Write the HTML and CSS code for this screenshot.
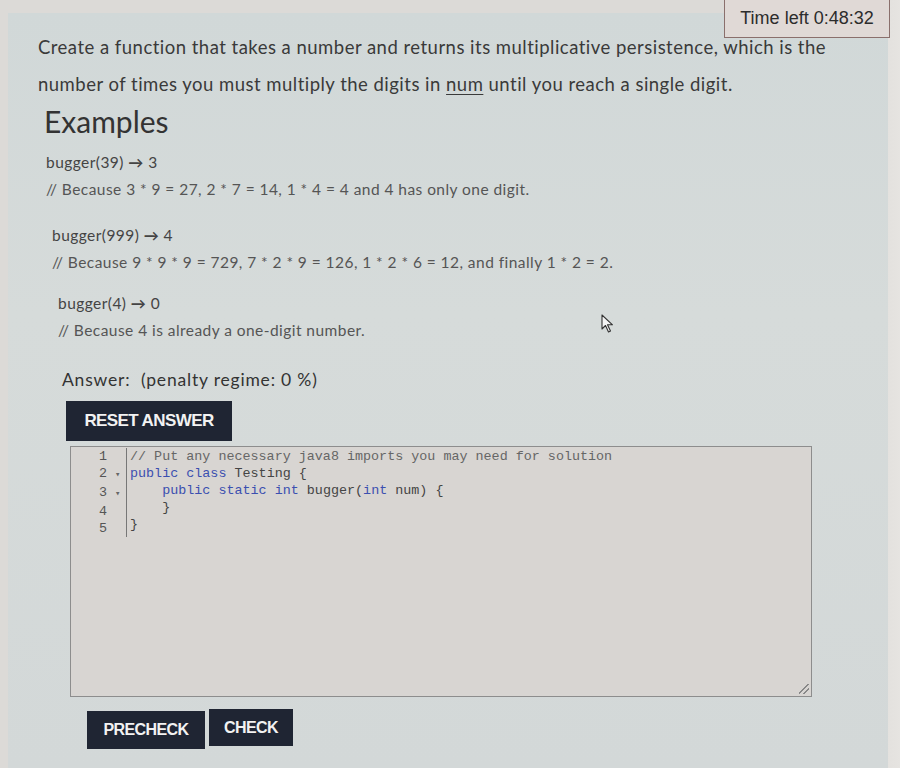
FILE: index.html
```html
<!DOCTYPE html>
<html>
<head>
<meta charset="utf-8">
<link rel="stylesheet" href="styles.css">
</head>
<body>
<div class="page">
  <div class="timer">Time left 0:48:32</div>
  <div class="panel">
    <p class="desc">Create a function that takes a number and returns its multiplicative persistence, which is the number of times you must multiply the digits in <u>num</u> until you reach a single digit.</p>
    <h2 class="heading">Examples</h2>
    <div class="example ex1">
      <div class="call">bugger(39) <span class="arrow">&rarr;</span> 3</div>
      <div class="comment">// Because 3 * 9 = 27, 2 * 7 = 14, 1 * 4 = 4 and 4 has only one digit.</div>
    </div>
    <div class="example ex2">
      <div class="call">bugger(999) <span class="arrow">&rarr;</span> 4</div>
      <div class="comment">// Because 9 * 9 * 9 = 729, 7 * 2 * 9 = 126, 1 * 2 * 6 = 12, and finally 1 * 2 = 2.</div>
    </div>
    <div class="example ex3">
      <div class="call">bugger(4) <span class="arrow">&rarr;</span> 0</div>
      <div class="comment">// Because 4 is already a one-digit number.</div>
    </div>
    <div class="answer">Answer:&nbsp; (penalty regime: 0 %)</div>
    <button class="btn reset">RESET ANSWER</button>
    <div class="editor">
      <div class="code-area">
        <div class="gutter">
          <div class="ln">1</div>
          <div class="ln">2 <span class="fold">&#9662;</span></div>
          <div class="ln">3 <span class="fold">&#9662;</span></div>
          <div class="ln">4</div>
          <div class="ln">5</div>
        </div>
        <div class="code">
          <div class="cl"><span class="cm">// Put any necessary java8 imports you may need for solution</span></div>
          <div class="cl"><span class="kw">public</span> <span class="kw">class</span> Testing {</div>
          <div class="cl">    <span class="kw">public</span> <span class="kw">static</span> <span class="kw">int</span> bugger(<span class="kw">int</span> num) {</div>
          <div class="cl">    }</div>
          <div class="cl">}</div>
        </div>
      </div>
      <div class="resize"></div>
    </div>
    <div class="actions">
      <button class="btn pre">PRECHECK</button>
      <button class="btn chk">CHECK</button>
    </div>
  </div>
  <svg class="cursor" width="14" height="20" viewBox="0 0 14 20"><path d="M1 1 L1 15 L4.5 11.5 L7.5 18 L9.5 17 L6.5 10.8 L11.5 10.8 Z" fill="#f4f4f4" stroke="#333" stroke-width="1.1" stroke-linejoin="round"/></svg>
</div>
</body>
</html>
```

FILE: styles.css
```css
* { box-sizing: border-box; }
html, body {
  margin: 0;
  padding: 0;
  background: #dcdad7;
}
body {
  font-family: "Lato", "Liberation Sans", sans-serif;
  color: #3c3c3c;
  width: 900px;
  height: 768px;
  overflow: hidden;
}
.page {
  position: relative;
  width: 900px;
  height: 768px;
  padding: 13px 12px 0 8px;
  background: linear-gradient(90deg, #dcdad7 0, #dcdad7 95%, #e6e4e1 100%);
}
.timer {
  position: absolute;
  top: 0;
  left: 724px;
  width: 166px;
  height: 38px;
  border: 1px solid #8a6f6c;
  border-top: none;
  background: #e0d9d6;
  color: #2c2c2c;
  font-family: "Liberation Sans", Arial, sans-serif;
  font-size: 18px;
  line-height: 37px;
  text-align: center;
  z-index: 2;
}
.panel {
  height: 755px;
  background: linear-gradient(180deg, #d1d8d8 0%, #d6dbda 40%, #d3d8d8 100%);
  padding: 16px 40px 0 30px;
}
.desc {
  margin: 0;
  font-size: 18.5px;
  letter-spacing: 0.48px;
  line-height: 37px;
  color: #3a3a3a;
  width: 802px;
}
.desc u { text-underline-offset: 3px; }
.heading {
  margin: 1px 0 0 6px;
  font-weight: 400;
  font-size: 30px;
  line-height: 34px;
  color: #333;
}
.example {
  font-size: 15.5px;
  line-height: 27px;
  letter-spacing: 0.45px;
  color: #444;
}
.ex1 { margin: 11px 0 0 8px; }
.ex2 { margin: 19px 0 0 14px; }
.ex3 { margin: 14px 0 0 20px; }
.comment { color: #555; }
.arrow { font-size: 15px; font-weight: 700; }
.answer {
  margin: 23px 0 0 24px;
  font-size: 17.5px;
  letter-spacing: 0.8px;
  line-height: 26px;
  color: #333;
}
.btn {
  border: none;
  background: #1f2533;
  color: #f2f2f2;
  font-family: "Liberation Sans", Arial, sans-serif;
  font-weight: 700;
  letter-spacing: -0.6px;
  cursor: pointer;
  padding: 0;
}
.reset {
  display: block;
  margin: 8px 0 0 28px;
  width: 166px;
  height: 40px;
  font-size: 17px;
}
.editor {
  position: relative;
  margin: 5px 0 0 32px;
  width: 742px;
  height: 251px;
  border: 1px solid #8d8d8d;
  background: #d8d5d2;
  padding-top: 1px;
}
.code-area {
  display: flex;
  font-family: "Liberation Mono", "DejaVu Sans Mono", monospace;
  font-size: 13.4px;
  line-height: 17px;
}
.gutter {
  width: 56px;
  border-right: 1px solid #777;
  color: #555;
  padding-left: 28px;
}
.ln { white-space: pre; }
.fold { font-size: 9px; color: #666; }
.code {
  padding-left: 3px;
  color: #444;
}
.cl { white-space: pre; }
.kw { color: #3b4fb0; }
.cm { color: #666; }
.resize {
  position: absolute;
  right: 2px;
  bottom: 2px;
  width: 10px;
  height: 10px;
  background: linear-gradient(135deg, transparent 45%, #888 45%, #888 55%, transparent 55%, transparent 70%, #888 70%, #888 80%, transparent 80%);
}
.actions {
  display: flex;
  gap: 4px;
  margin: 14px 0 0 49px;
  align-items: flex-start;
}
.pre {
  width: 118px;
  height: 38px;
  font-size: 16px;
}
.chk {
  width: 84px;
  height: 37px;
  font-size: 16px;
  margin-top: -2px;
}
.cursor {
  position: absolute;
  left: 601px;
  top: 314px;
}
```
